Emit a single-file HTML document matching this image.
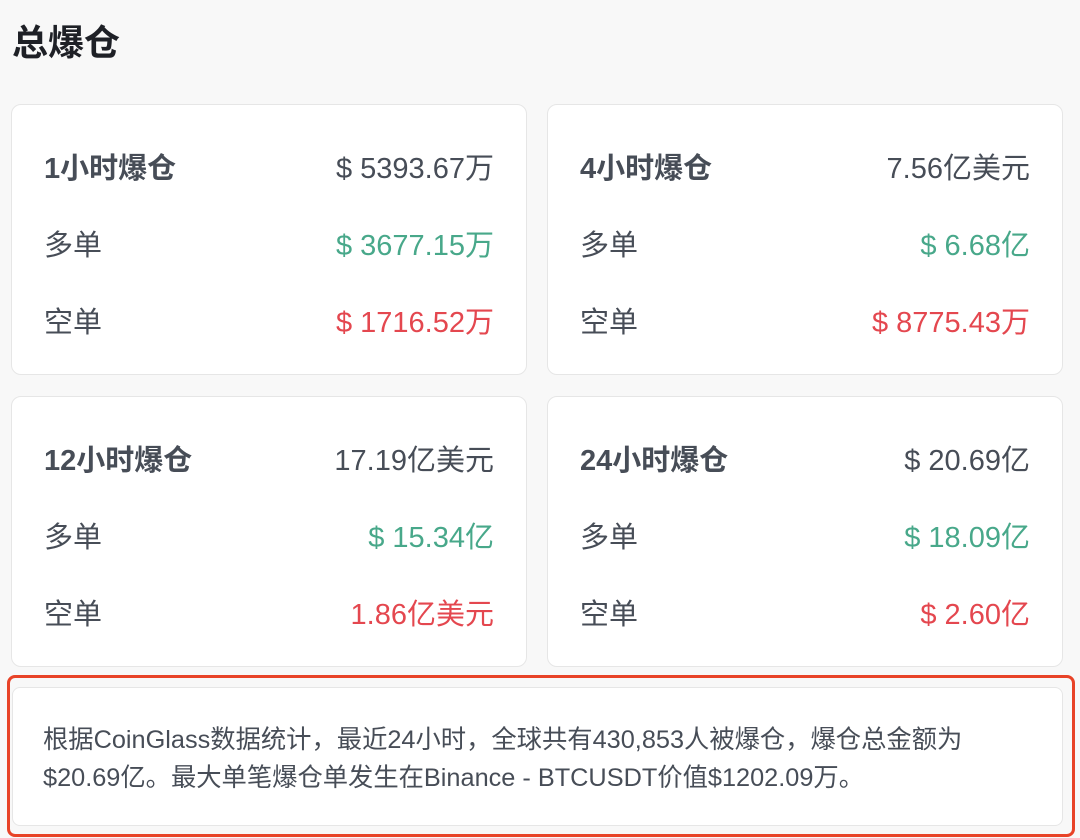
<!DOCTYPE html>
<html><head><meta charset="utf-8"><style>
*{margin:0;padding:0;box-sizing:border-box}
body{width:1080px;height:838px;background:#f8f8f8;font-family:"Liberation Sans","Noto Sans CJK SC",sans-serif;position:relative;overflow:hidden;color:#474d57}
h1{position:absolute;left:12px;top:19px;font-size:36px;font-weight:bold;color:#1e2026;line-height:48px}
.card{position:absolute;width:516px;height:271px;background:#fff;border:1.5px solid #e6e6e6;border-radius:10px}
.row{position:absolute;left:32px;right:32px;height:40px;line-height:40px;font-size:29px;display:flex;justify-content:space-between}
.r1{top:44px}.r1 span:first-child{font-weight:bold}.r2{top:121px}.r3{top:198px}
.g{color:#48a88a}.d{color:#e4474f}
.red{position:absolute;left:7px;top:675px;width:1068px;height:162px;border:3px solid #e84328;border-radius:8px}
.note{position:absolute;left:12px;top:687px;width:1051px;height:139px;background:#fff;border:1.5px solid #e6e6e6;border-radius:8px;padding:33px 20px 0 30px;font-size:25.3px;line-height:38px;color:#474d57;white-space:nowrap}
</style></head><body>
<h1>总爆仓</h1>
<div class="card" style="left:11px;top:104px">
<div class="row r1"><span>1小时爆仓</span><span>$ 5393.67万</span></div>
<div class="row r2"><span>多单</span><span class="g">$ 3677.15万</span></div>
<div class="row r3"><span>空单</span><span class="d">$ 1716.52万</span></div></div>
<div class="card" style="left:547px;top:104px">
<div class="row r1"><span>4小时爆仓</span><span>7.56亿美元</span></div>
<div class="row r2"><span>多单</span><span class="g">$ 6.68亿</span></div>
<div class="row r3"><span>空单</span><span class="d">$ 8775.43万</span></div></div>
<div class="card" style="left:11px;top:396px">
<div class="row r1"><span>12小时爆仓</span><span>17.19亿美元</span></div>
<div class="row r2"><span>多单</span><span class="g">$ 15.34亿</span></div>
<div class="row r3"><span>空单</span><span class="d">1.86亿美元</span></div></div>
<div class="card" style="left:547px;top:396px">
<div class="row r1"><span>24小时爆仓</span><span>$ 20.69亿</span></div>
<div class="row r2"><span>多单</span><span class="g">$ 18.09亿</span></div>
<div class="row r3"><span>空单</span><span class="d">$ 2.60亿</span></div></div>
<div class="red"></div>
<div class="note">根据CoinGlass数据统计，最近24小时，全球共有430,853人被爆仓，爆仓总金额为<br>$20.69亿。最大单笔爆仓单发生在Binance - BTCUSDT价值$1202.09万。</div>
</body></html>
